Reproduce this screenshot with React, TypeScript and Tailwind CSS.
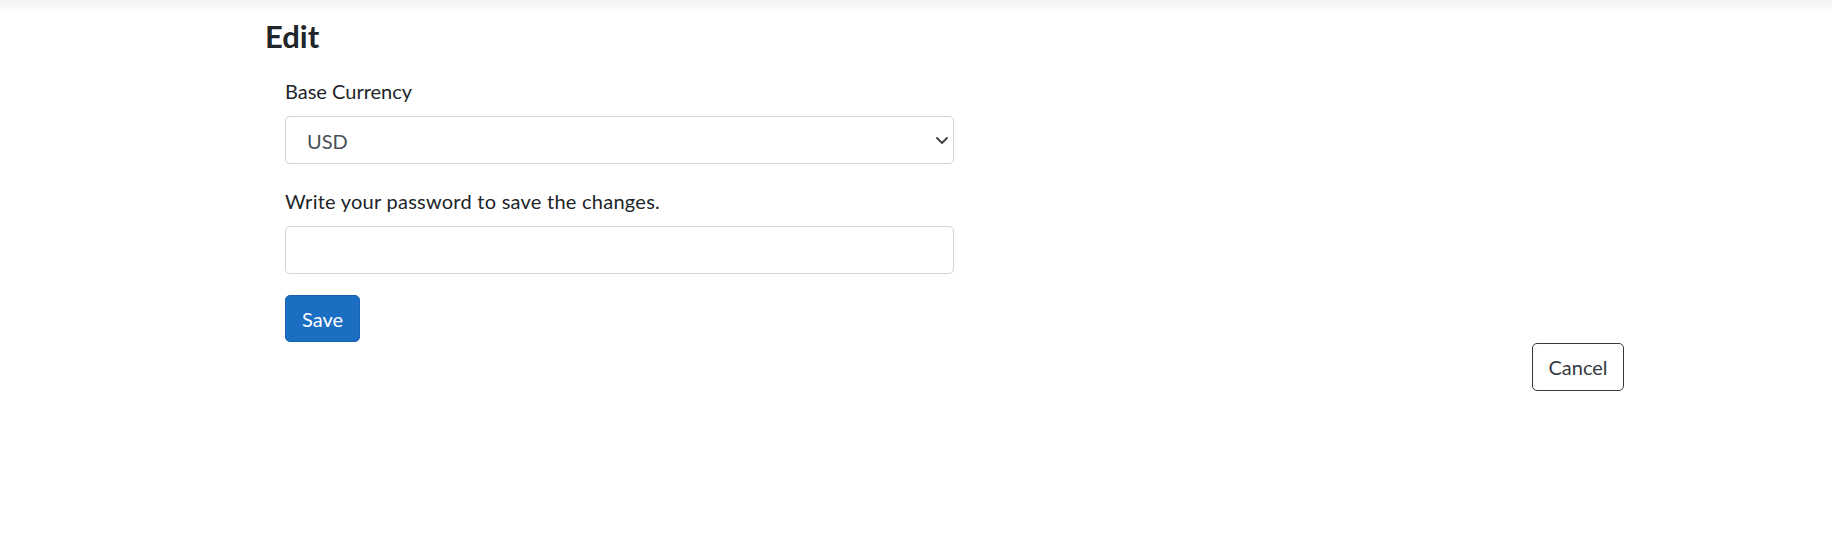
import React from "react";

export default function App() {
  return (
    <div
      className="min-h-[547px] w-full bg-white text-[#212529]"
      style={{ fontFamily: "Lato, 'Noto Sans', sans-serif" }}
    >
      <div className="h-[14px] bg-gradient-to-b from-[#f3f3f3] to-white" />
      <div className="ml-[265px] w-[1359px]">
        <h3 className="mt-[4px] text-[31px] font-bold leading-[36px] text-[#212529]">Edit</h3>
        <form className="mt-[22px] ml-[20px] w-[669px]" onSubmit={(e) => e.preventDefault()}>
          <div>
            <label className="block text-[20px] leading-[30px] text-[#212529]">Base Currency</label>
            <div className="relative mt-[10px]">
              <select
                defaultValue="USD"
                className="block h-[48px] w-full appearance-none rounded-[5px] border border-[#ced4da] bg-white pt-[2px] pl-[21px] pr-[40px] text-[20px] leading-[30px] text-[#495057] outline-none"
                style={{ fontFamily: "Lato, 'Noto Sans', sans-serif" }}
              >
                <option value="USD">USD</option>
                <option value="EUR">EUR</option>
                <option value="GBP">GBP</option>
              </select>
              <svg
                className="pointer-events-none absolute right-[6px] top-[21px]"
                width="12"
                height="7"
                viewBox="0 0 12 7"
                fill="none"
              >
                <path d="M1 1l5 5 5-5" stroke="#3f4246" strokeWidth="1.8" strokeLinecap="round" strokeLinejoin="round" />
              </svg>
            </div>
          </div>
          <div className="mt-[22px]">
            <label className="block text-[20px] leading-[30px] tracking-[0.25px] text-[#212529]">
              Write your password to save the changes.
            </label>
            <input
              type="password"
              className="mt-[10px] block h-[48px] w-full rounded-[5px] border border-[#ced4da] bg-white px-[15px] text-[20px] text-[#495057] outline-none"
            />
          </div>
          <button
            type="submit"
            className="mt-[21px] flex h-[47px] w-[75px] items-center justify-center rounded-[5px] border border-[#1861ac] bg-[#1b6ec2] text-[20px] leading-[30px] text-white"
          >
            Save
          </button>
        </form>
        <div className="mt-[1px] flex justify-end">
          <button
            type="button"
            className="flex h-[48px] w-[92px] items-center justify-center rounded-[5px] border border-[#343a40] bg-white text-[20px] leading-[30px] text-[#343a40]"
          >
            Cancel
          </button>
        </div>
      </div>
    </div>
  );
}
